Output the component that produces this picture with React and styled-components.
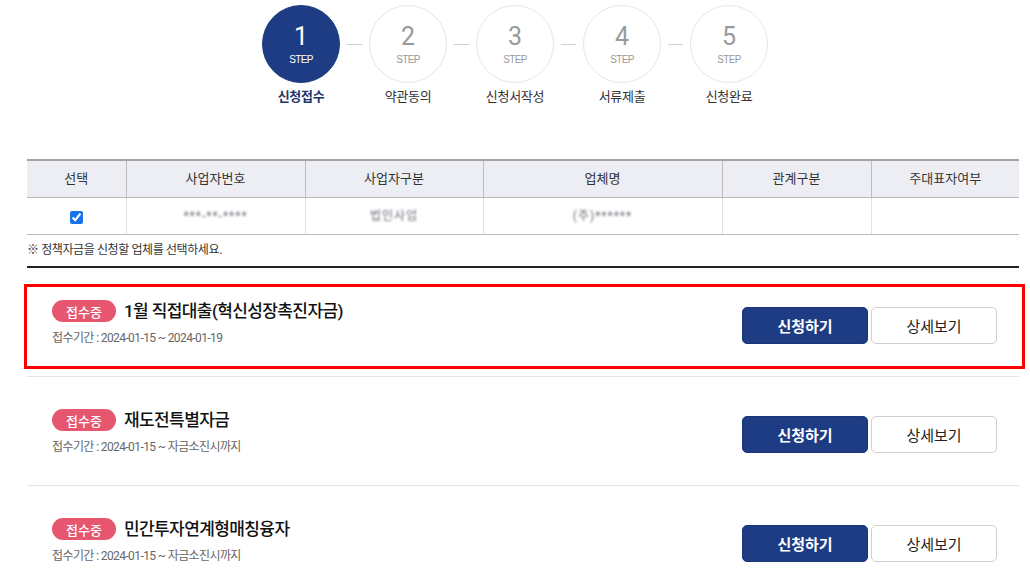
import React from 'react';
import styled, { createGlobalStyle } from 'styled-components';

const GlobalStyle = createGlobalStyle`
  body {
    margin: 0;
    background: #fff;
    font-family: Roboto, 'Noto Sans CJK KR', sans-serif;
    color: #222;
  }
`;

const Page = styled.div`
  padding: 5px 11px 0 27px;
`;

const Steps = styled.ol`
  display: flex;
  justify-content: center;
  align-items: flex-start;
  list-style: none;
  margin: 0 -11px 0 -27px;
  padding: 0;
`;

const Step = styled.li`
  display: flex;
  flex-direction: column;
  align-items: center;
  width: 78px;
`;

const Circle = styled.div`
  width: 78px;
  height: 78px;
  box-sizing: border-box;
  border-radius: 50%;
  display: flex;
  flex-direction: column;
  align-items: center;
  justify-content: center;
  background: ${(p) => (p.$active ? '#1e3c83' : '#fff')};
  border: 1px solid ${(p) => (p.$active ? '#1e3c83' : '#e6e6e6')};
  color: ${(p) => (p.$active ? '#fff' : '#9a9a9a')};
`;

const StepNum = styled.span`
  font-size: 25px;
  font-weight: 400;
  line-height: 26px;
  margin-top: 1px;
`;

const StepWord = styled.span`
  font-family: 'Liberation Sans', sans-serif;
  font-size: 10px;
  letter-spacing: -0.6px;
  line-height: 12px;
  margin-top: 4px;
`;

const StepLabel = styled.span`
  margin-top: 5px;
  font-size: 13px;
  line-height: 18px;
  white-space: nowrap;
  color: ${(p) => (p.$active ? '#1e3569' : '#333')};
  font-weight: ${(p) => (p.$active ? 700 : 400)};
  letter-spacing: -0.3px;
`;

const Dash = styled.li`
  width: 15px;
  height: 1px;
  background: #cfcfcf;
  margin: 39px 7px 0;
`;

const Table = styled.table`
  width: 992px;
  margin-top: 53px;
  border-collapse: collapse;
  table-layout: fixed;
  border-top: 2px solid #a3a3a3;
  font-size: 13px;
  line-height: 16px;
  color: #333;
`;

const Th = styled.th`
  height: 36px;
  padding: 0;
  background: #eceef3;
  font-weight: 400;
  border-bottom: 1px solid #b9b9b9;
  border-left: 1px solid #bdbdbd;
  &:first-child {
    border-left: none;
  }
`;

const Td = styled.td`
  height: 36px;
  padding: 0;
  text-align: center;
  vertical-align: middle;
  border-bottom: 1px solid #b9b9b9;
  border-left: 1px solid #e1e1e1;
  &:first-child {
    border-left: none;
  }
`;

const Check = styled.input`
  display: block;
  width: 13px;
  height: 13px;
  margin: 2px auto 0;
  accent-color: #1a73e8;
`;

const Masked = styled.span`
  display: inline-block;
  color: #6f6f7c;
  font-size: 12px;
  filter: blur(1.3px);
  letter-spacing: 1px;
`;

const Notice = styled.p`
  margin: 7px 0 0;
  font-size: 12px;
  line-height: 16px;
  color: #333;
  letter-spacing: -0.4px;
  padding-bottom: 8px;
  border-bottom: 2px solid #222;
`;

const List = styled.ul`
  list-style: none;
  margin: 0;
  padding: 0;
`;

const Item = styled.li`
  padding: 16px 0 7px;
  border-bottom: 1px solid #e4e4e4;
`;

const Frame = styled.div`
  height: 85px;
  box-sizing: border-box;
  margin: 0 -6px 0 -3px;
  padding: 0 25px 0 25px;
  border: 3px solid ${(p) => (p.$highlight ? '#ff0000' : 'transparent')};
  display: flex;
  align-items: center;
  justify-content: space-between;
`;

const Info = styled.div`
  display: flex;
  flex-direction: column;
  margin-top: -8px;
`;

const TitleRow = styled.div`
  display: flex;
  align-items: center;
  gap: 8px;
`;

const Badge = styled.span`
  width: 64px;
  height: 22px;
  border-radius: 11px;
  background: #e6566f;
  color: #fff;
  font-size: 13px;
  font-weight: 500;
  display: flex;
  align-items: center;
  justify-content: center;
`;

const Title = styled.h3`
  margin: 0;
  font-size: 17px;
  line-height: 24px;
  font-weight: 500;
  color: #111;
  letter-spacing: -0.6px;
`;

const Period = styled.p`
  margin: 7px 0 0;
  font-size: 12px;
  line-height: 16px;
  color: #666;
  letter-spacing: -0.6px;
`;

const Buttons = styled.div`
  display: flex;
  gap: 3px;
  margin-top: -3px;
`;

const Button = styled.button`
  width: 126px;
  height: 37px;
  box-sizing: border-box;
  border-radius: 5px;
  font-family: inherit;
  font-size: 15px;
  cursor: pointer;
  border: 1px solid ${(p) => (p.$primary ? '#1a3579' : '#cfcfcf')};
  background: ${(p) => (p.$primary ? '#1e3c83' : '#fff')};
  color: ${(p) => (p.$primary ? '#fff' : '#222')};
  font-weight: ${(p) => (p.$primary ? 700 : 400)};
`;

const steps = ['신청접수', '약관동의', '신청서작성', '서류제출', '신청완료'];

const funds = [
  { title: '1월 직접대출(혁신성장촉진자금)', period: '2024-01-15 ~ 2024-01-19' },
  { title: '재도전특별자금', period: '2024-01-15 ~ 자금소진시까지' },
  { title: '민간투자연계형매칭융자', period: '2024-01-15 ~ 자금소진시까지' },
];

export default function App() {
  return (
    <Page>
      <GlobalStyle />
      <Steps>
        {steps.map((label, i) => (
          <React.Fragment key={label}>
            {i > 0 && <Dash />}
            <Step>
              <Circle $active={i === 0}>
                <StepNum>{i + 1}</StepNum>
                <StepWord>STEP</StepWord>
              </Circle>
              <StepLabel $active={i === 0}>{label}</StepLabel>
            </Step>
          </React.Fragment>
        ))}
      </Steps>

      <Table>
        <colgroup>
          <col width="99" />
          <col width="179" />
          <col width="178" />
          <col width="239" />
          <col width="149" />
          <col width="148" />
        </colgroup>
        <thead>
          <tr>
            <Th>선택</Th>
            <Th>사업자번호</Th>
            <Th>사업자구분</Th>
            <Th>업체명</Th>
            <Th>관계구분</Th>
            <Th>주대표자여부</Th>
          </tr>
        </thead>
        <tbody>
          <tr>
            <Td>
              <Check type="checkbox" defaultChecked />
            </Td>
            <Td>
              <Masked>***-**-****</Masked>
            </Td>
            <Td>
              <Masked>법인사업</Masked>
            </Td>
            <Td>
              <Masked>(주)******</Masked>
            </Td>
            <Td />
            <Td />
          </tr>
        </tbody>
      </Table>
      <Notice>※ 정책자금을 신청할 업체를 선택하세요.</Notice>

      <List>
        {funds.map((f, i) => (
          <Item key={f.title}>
            <Frame $highlight={i === 0}>
              <Info>
                <TitleRow>
                  <Badge>접수중</Badge>
                  <Title>{f.title}</Title>
                </TitleRow>
                <Period>접수기간 : {f.period}</Period>
              </Info>
              <Buttons>
                <Button $primary>신청하기</Button>
                <Button>상세보기</Button>
              </Buttons>
            </Frame>
          </Item>
        ))}
      </List>
    </Page>
  );
}
